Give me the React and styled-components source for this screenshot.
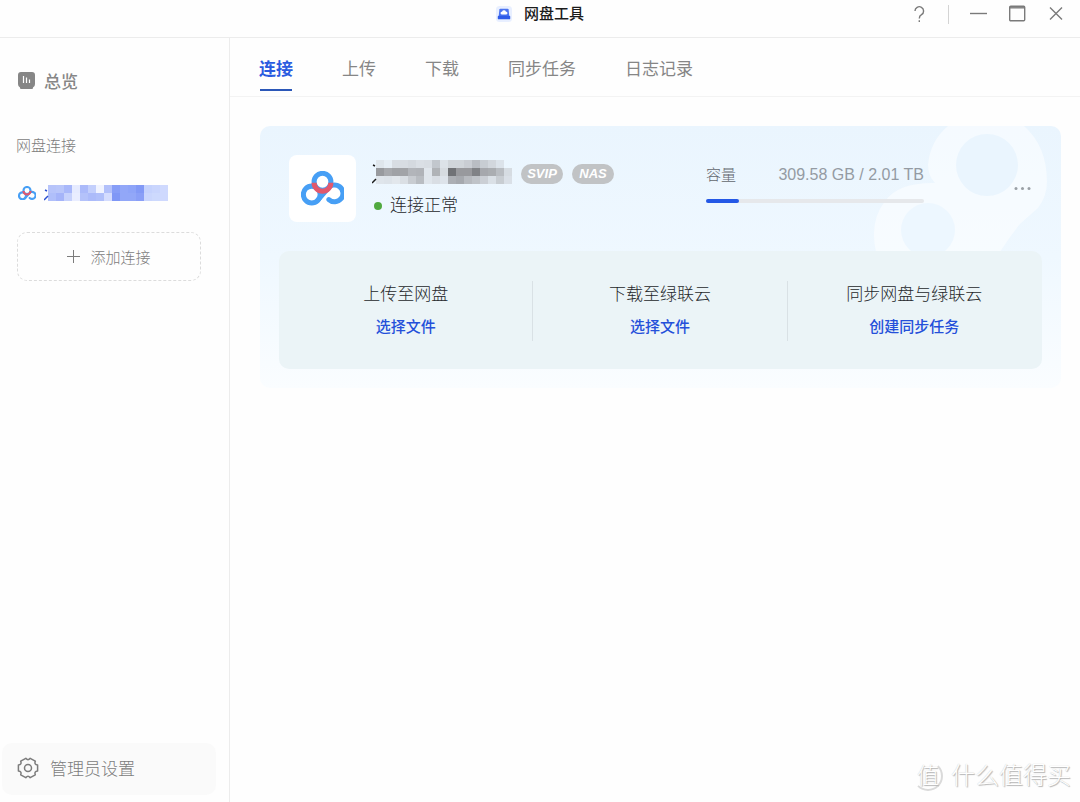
import React, { useState } from "react";
import styled, { createGlobalStyle } from "styled-components";

const GlobalStyle = createGlobalStyle`
  * {
    box-sizing: border-box;
  }
  body {
    margin: 0;
    background-color: #fefefe;
    font-family: "Liberation Sans", "Noto Sans CJK SC", sans-serif;
    color: #26282b;
  }
  button {
    font-family: inherit;
    border: none;
    padding: 0;
    background-color: transparent;
    cursor: pointer;
  }
`;

const Window = styled.div`
  min-height: 100vh;
  display: flex;
  flex-direction: column;
  position: relative;
`;

const TitleBar = styled.header`
  display: grid;
  grid-template-columns: 1fr auto 1fr;
  align-items: center;
  height: 38px;
  padding: 0 14px 9px;
  border-bottom: 1px solid #ececec;
`;

const Title = styled.h1`
  grid-column: 2;
  display: flex;
  align-items: center;
  gap: 12px;
  margin: 0;
  font-size: 15px;
  line-height: 28px;
  font-weight: 500;
  color: #1c1c1c;
`;

const WindowControls = styled.div`
  display: flex;
  justify-content: flex-end;
  align-items: center;
  gap: 19px;
`;

const ControlButton = styled.button`
  display: flex;
  width: 20px;
  height: 20px;
`;

const Separator = styled.span`
  width: 1px;
  height: 19px;
  background-color: #d4d4d4;
`;

const Body = styled.div`
  flex: 1;
  display: flex;
`;

const Sidebar = styled.aside`
  width: 230px;
  flex-shrink: 0;
  display: flex;
  flex-direction: column;
  padding: 28px 13px 7px 2px;
  border-right: 1px solid #ececec;
`;

const NavItem = styled.a`
  display: flex;
  align-items: center;
  gap: 9px;
  height: 28px;
  padding-left: 16px;
  font-size: 17px;
  font-weight: 500;
  color: #868686;
  text-decoration: none;
`;

const SectionLabel = styled.h2`
  margin: 40px 0 0;
  padding-left: 14px;
  font-size: 15px;
  line-height: 24px;
  font-weight: 300;
  color: #7c7c7c;
`;

const AccountLink = styled(NavItem)`
  gap: 8px;
  margin-top: 21px;
`;

const AddButton = styled.button`
  display: flex;
  align-items: center;
  justify-content: center;
  gap: 10px;
  height: 49px;
  margin: 25px 15px 0 15px;
  border: 1px dashed #dcdcdc;
  border-radius: 10px;
  font-size: 15px;
  font-weight: 300;
  color: #7c7c7c;
`;

const AdminButton = styled.button`
  display: flex;
  align-items: center;
  gap: 11px;
  height: 52px;
  margin-top: auto;
  padding: 0 0 3px 15px;
  border-radius: 10px;
  background-color: #fafafa;
  font-size: 17px;
  font-weight: 300;
  color: #7c7c7c;
`;

const Main = styled.main`
  flex: 1;
  min-width: 0;
`;

const Tabs = styled.nav`
  display: flex;
  gap: 49px;
  height: 59px;
  padding: 0 29px;
  border-bottom: 1px solid #f3f3f3;
`;

const Tab = styled.button`
  display: flex;
  flex-direction: column;
  align-items: center;
  padding-top: 20px;
  font-size: 17px;
  line-height: 24px;
  font-weight: ${({ $active }) => ($active ? "700" : "400")};
  color: ${({ $active }) => ($active ? "#2a5be0" : "#868686")};
  &::after {
    content: "";
    width: 32px;
    height: 2px;
    margin-top: 7px;
    background-color: ${({ $active }) => ($active ? "#2b57b8" : "transparent")};
  }
`;

const Card = styled.section`
  position: relative;
  overflow: hidden;
  margin: 29px 19px 0 30px;
  padding: 29px 19px 19px;
  border-radius: 10px;
  background: linear-gradient(#eaf5fe, #eff8ff 50%, #fafdff);
`;

const CardPattern = styled.svg`
  position: absolute;
  top: 0;
  right: 0;
  width: 190px;
  height: 126px;
`;

const CardHeader = styled.div`
  position: relative;
  display: flex;
  align-items: center;
  padding: 0 10px;
`;

const LogoTile = styled.div`
  display: flex;
  align-items: center;
  justify-content: center;
  width: 67px;
  height: 67px;
  border-radius: 8px;
  background-color: #fff;
`;

const Account = styled.div`
  flex: 1;
  display: flex;
  flex-direction: column;
  gap: 10px;
  padding-left: 16px;
`;

const AccountRow = styled.div`
  display: flex;
  align-items: flex-end;
  gap: 9px;
`;

const Badge = styled.span`
  width: 42px;
  height: 20px;
  border-radius: 10px;
  background-color: #c1c3c5;
  color: #fff;
  font-size: 13px;
  line-height: 20px;
  font-weight: 700;
  font-style: italic;
  text-align: center;
`;

const Status = styled.p`
  display: flex;
  align-items: center;
  gap: 8px;
  margin: 0;
  padding-left: 2px;
  font-size: 17px;
  line-height: 24px;
  font-weight: 300;
  &::before {
    content: "";
    width: 8px;
    height: 8px;
    border-radius: 50%;
    background-color: #50a93f;
  }
`;

const Capacity = styled.div`
  width: 218px;
  margin: 0 88px 12px 0;
`;

const CapacityText = styled.div`
  display: flex;
  justify-content: space-between;
  font-size: 15px;
  line-height: 24px;
  font-weight: 300;
  color: #62676d;
`;

const Amount = styled.span`
  font-size: 16px;
  color: #949ba3;
`;

const Track = styled.div`
  height: 4px;
  margin-top: 12px;
  border-radius: 2px;
  background-color: #e6e8eb;
`;

const Fill = styled.div`
  height: 100%;
  border-radius: 2px;
  background-color: #2458e6;
`;

const MoreButton = styled.button`
  display: flex;
  width: 20px;
  height: 20px;
`;

const Actions = styled.div`
  position: relative;
  display: grid;
  grid-template-columns: repeat(3, 1fr);
  margin-top: 29px;
  padding: 30px 0 28px;
  border-radius: 10px;
  background-color: #ebf4f7;
`;

const Action = styled.div`
  display: flex;
  flex-direction: column;
  align-items: center;
  gap: 8px;
  height: 60px;
  padding-top: 2px;
  border-right: 1px solid #d9e1e5;
  &:last-child {
    border-right-color: transparent;
  }
`;

const ActionTitle = styled.h3`
  margin: 0;
  font-size: 17px;
  line-height: 24px;
  font-weight: 300;
`;

const ActionButton = styled.button`
  font-size: 15px;
  line-height: 24px;
  font-weight: 500;
  color: #2450da;
`;

const Watermark = styled.div`
  position: absolute;
  right: 9px;
  bottom: 8px;
  display: flex;
  align-items: center;
  gap: 8px;
  font-size: 24px;
  line-height: 36px;
  font-weight: 300;
  color: #fff;
  text-shadow: 1px 1px 1px #b4b4b4, 0 0 1px #c4c4c4;
`;

const WatermarkSeal = styled.span`
  width: 30px;
  height: 30px;
  border-radius: 50%;
  border: 2px solid #dadada;
  border-left-color: transparent;
  border-top-color: transparent;
  font-size: 22px;
  line-height: 25px;
  text-align: center;
`;

const NetdiskLogo = ({ size }) => (
  <svg width={size} height={(size * 102) / 128} viewBox="0 0 128 102" fill="none">
    <path
      d="M79 53 L50 87 M79 53 A25 25 0 1 1 83 85"
      stroke="#479ff5"
      strokeWidth="15"
      strokeLinecap="round"
    />
    <circle cx="32" cy="70" r="25" stroke="#479ff5" strokeWidth="15" />
    <circle cx="64" cy="32" r="25" fill="#fff" stroke="#479ff5" strokeWidth="15" />
    <path d="M39 35 A25 25 0 0 0 89 35" stroke="#e2586d" strokeWidth="15" />
  </svg>
);

const AppIcon = () => (
  <svg width="16" height="16" viewBox="0 0 18 18">
    <rect width="18" height="18" rx="4" fill="#e8efff" />
    <path d="M5 3h8q1 0 1.2 1L15 12H3l.8-8Q4 3 5 3z" fill="#4c74f0" />
    <rect x="2" y="11" width="14" height="4" rx="1" fill="#2f5be8" />
    <path d="M6.500 9.500a1.500 1.500 0 0 1 .3-3 2.300 2.300 0 0 1 4.400 0 1.500 1.500 0 0 1 .3 3z" fill="#fff" />
  </svg>
);

const OverviewIcon = () => (
  <svg width="17" height="17" viewBox="0 0 17 17">
    <path d="M3 0h11q3 0 3 3v9q0 3-2 3.500V16q0 1-1 1H3q-1 0-1-1v-.5Q0 15 0 12V3q0-3 3-3z" fill="#868686" />
    <path d="M5.500 4v7M8.500 5.500V11M11.500 7.500V11" stroke="#fff" strokeWidth="1.200" />
  </svg>
);

const GearIcon = () => (
  <svg width="22" height="22" viewBox="0 0 22 22" fill="none" stroke="#7c7c7c" strokeWidth="1.500">
    <path
      d="M20.600 8.100V13.900Q17 14.500 18.300 17.800L13.200 20.700Q11 17.800 8.800 20.700L3.700 17.800Q5 14.500 1.400 13.900V8.100Q5 7.500 3.700 4.200L8.800 1.300Q11 4.200 13.200 1.300L18.300 4.200Q17 7.500 20.600 8.100Z"
      strokeLinejoin="round"
    />
    <circle cx="11" cy="11" r="3.500" />
  </svg>
);

const greyCells = [
  ["#dfe6ec", "#e6eef5", "#d8dde3", "#d8dde3", "#d4d9df", "#dadfe5", "#d8dde3", "#c2c7cd", "#dce2e8", "#d0d5da", "#d0d5da", "#c9cdd3", "#b9bdc3", "#c8cdd3", "#d2d7dd", "#dce3ea", "transparent"],
  ["#989a9e", "#a7a9ad", "#a0a2a6", "#a2a4a8", "#b2b5ba", "#b0b3b8", "#e0e6ec", "#b0b3b7", "#d6dbe0", "#707276", "#98999d", "#98999d", "#808286", "#a6a8ad", "#aaadb1", "#b9bdc2", "#d6dce2"],
  ["#dfe5eb", "#dde3e9", "#e2e7ec", "#dadfe4", "#c8ccd1", "#b9bdc2", "#e0e6ec", "#d9dee4", "#dde3ea", "#acafb4", "#a6a9ae", "#b7babf", "#bfc3c8", "#cbcfd5", "#dae0e6", "#c8cdd2", "#dae0e7"],
];

const blueCells = [
  ["#b7c4fa", "#b9c6fa", "#a9b8fa", "#e6ebff", "#abbafa", "#c3cffc", "#f0f3ff", "#b2c0fa", "#869df7", "#92a7f8", "#8ea4f8", "#8299f6", "#c5d2fd", "#c9d5fd", "#cfd9fe"],
  ["#b0bffa", "#a5b4f9", "#c6d1fc", "#e9edff", "#b4c2fa", "#acbbfa", "#b0bffa", "#d4dcfe", "#7f97f6", "#92a7f8", "#92a7f8", "#8a9ff7", "#cad6fd", "#cdd9fd", "#cfd9fe"],
];

const Mosaic = ({ cells, label, ink }) => (
  <svg
    width={cells[0].length * 8 + 4}
    height={cells.length * 8}
    role="img"
    aria-label={label}
    shapeRendering="crispEdges"
  >
    {cells.map((row, y) =>
      row.map((fill, x) => (
        <rect key={`${x}-${y}`} x={x * 8 + 4} y={y * 8} width="8" height="8" fill={fill} />
      ))
    )}
    <g stroke={ink} strokeWidth="1.500" shapeRendering="auto">
      <path d={`M0 ${cells.length * 8 - 1}l4-4M1 5l2 1`} />
    </g>
  </svg>
);

const tabs = ["连接", "上传", "下载", "同步任务", "日志记录"];

const actions = [
  { title: "上传至网盘", button: "选择文件" },
  { title: "下载至绿联云", button: "选择文件" },
  { title: "同步网盘与绿联云", button: "创建同步任务" },
];

const App = () => {
  const [activeTab, setActiveTab] = useState("连接");
  const used = 309.58;
  const total = 2.01;

  return (
    <>
      <GlobalStyle />
      <Window>
        <TitleBar>
          <Title>
            <AppIcon />
            网盘工具
          </Title>
          <WindowControls>
            <ControlButton aria-label="帮助">
              <svg width="20" height="20" fill="none" stroke="#7a7a7a" strokeWidth="1.400">
                <path d="M6 7a4.300 4.300 0 1 1 6.500 3.700Q10.300 12 10.300 14.500" />
                <path d="M10.300 16.200v1.800" />
              </svg>
            </ControlButton>
            <Separator />
            <ControlButton aria-label="最小化">
              <svg width="20" height="20" stroke="#7a7a7a" strokeWidth="1.400">
                <path d="M2 9.500h17" />
              </svg>
            </ControlButton>
            <ControlButton aria-label="最大化">
              <svg width="20" height="20" fill="none" stroke="#7a7a7a" strokeWidth="1.400">
                <rect x="2.700" y="2.200" width="15" height="14.500" rx="1" />
                <path d="M2.700 3.800h15" />
              </svg>
            </ControlButton>
            <ControlButton aria-label="关闭">
              <svg width="20" height="20" stroke="#7a7a7a" strokeWidth="1.400">
                <path d="M4 3.500l12 12M16 3.500L4 15.500" />
              </svg>
            </ControlButton>
          </WindowControls>
        </TitleBar>

        <Body>
          <Sidebar>
            <NavItem href="#overview">
              <OverviewIcon />
              总览
            </NavItem>
            <SectionLabel>网盘连接</SectionLabel>
            <AccountLink href="#account">
              <NetdiskLogo size={18} />
              <Mosaic cells={blueCells} label="账号" ink="#2b4fd0" />
            </AccountLink>
            <AddButton>
              <svg width="13" height="13" stroke="#7c7c7c" strokeWidth="1">
                <path d="M6.500 0v13M0 6.500h13" />
              </svg>
              添加连接
            </AddButton>
            <AdminButton>
              <GearIcon />
              管理员设置
            </AdminButton>
          </Sidebar>

          <Main>
            <Tabs>
              {tabs.map((tab) => (
                <Tab key={tab} $active={tab === activeTab} onClick={() => setActiveTab(tab)}>
                  {tab}
                </Tab>
              ))}
            </Tabs>

            <Card>
              <CardPattern viewBox="0 0 190 126" fill="none">
                <path
                  d="M57 39a57 57 0 0 1 20-39h76q23 20 23 56 0 14-9 26-8 7-18 16-10 12-20 28H5Q-2 96 14 75 28 56 64 57 57 50 57 39z"
                  fill="#fff"
                  fillOpacity="0.5"
                />
                <circle cx="116" cy="39" r="31" fill="#eaf5fe" />
                <circle cx="57" cy="104" r="27" fill="#edf7ff" />
              </CardPattern>
              <CardHeader>
                <LogoTile>
                  <NetdiskLogo size={43} />
                </LogoTile>
                <Account>
                  <AccountRow>
                    <Mosaic cells={greyCells} label="账号名称" ink="#1c1c1c" />
                    <Badge>SVIP</Badge>
                    <Badge>NAS</Badge>
                  </AccountRow>
                  <Status>连接正常</Status>
                </Account>
                <Capacity>
                  <CapacityText>
                    <span>容量</span>
                    <Amount>
                      {used} GB / {total} TB
                    </Amount>
                  </CapacityText>
                  <Track>
                    <Fill style={{ width: `${Math.round((used / (total * 1024)) * 100)}%` }} />
                  </Track>
                </Capacity>
                <MoreButton aria-label="更多">
                  <svg width="20" height="20" fill="#9aa0a6">
                    <circle cx="4" cy="9.500" r="1.500" />
                    <circle cx="10.500" cy="9.500" r="1.500" />
                    <circle cx="17" cy="9.500" r="1.500" />
                  </svg>
                </MoreButton>
              </CardHeader>
              <Actions>
                {actions.map((action) => (
                  <Action key={action.title}>
                    <ActionTitle>{action.title}</ActionTitle>
                    <ActionButton>{action.button}</ActionButton>
                  </Action>
                ))}
              </Actions>
            </Card>
          </Main>
        </Body>

        <Watermark>
          <WatermarkSeal>值</WatermarkSeal>
          什么值得买
        </Watermark>
      </Window>
    </>
  );
};

export default App;
